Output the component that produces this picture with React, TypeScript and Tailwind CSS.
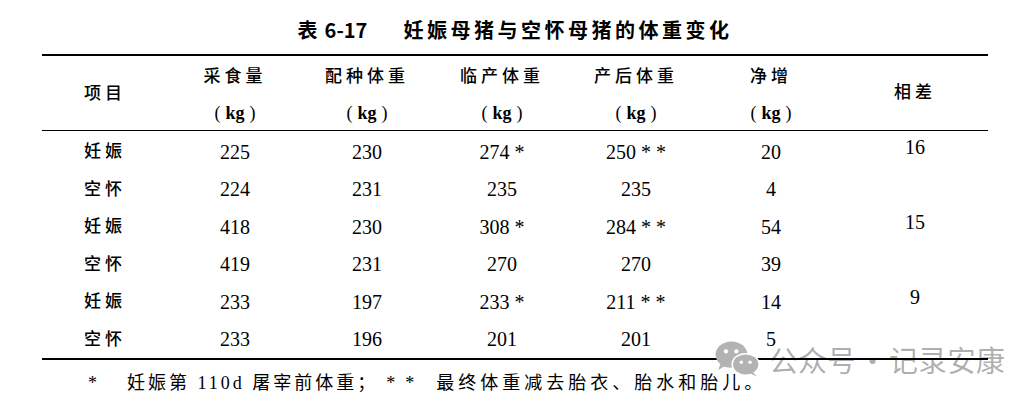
import React from "react";

const cjk = { fontFamily: '"Liberation Serif", "Noto Sans CJK SC", serif' };
const title = { fontFamily: '"Noto Sans CJK SC", "Noto Sans", sans-serif' };

const cols = "grid grid-cols-[126px_134px_130px_140px_128px_142px_146px]";

type Row = { name: string; vals: string[]; diff?: string };
const rows: Row[] = [
  { name: "妊娠", vals: ["225", "230", "274 *", "250 * *", "20"], diff: "16" },
  { name: "空怀", vals: ["224", "231", "235", "235", "4"] },
  { name: "妊娠", vals: ["418", "230", "308 *", "284 * *", "54"], diff: "15" },
  { name: "空怀", vals: ["419", "231", "270", "270", "39"] },
  { name: "妊娠", vals: ["233", "197", "233 *", "211 * *", "14"], diff: "9" },
  { name: "空怀", vals: ["233", "196", "201", "201", "5"] },
];

const headers = ["采食量", "配种体重", "临产体重", "产后体重", "净增"];

function WeChatIcon() {
  return (
    <svg width="46" height="38" viewBox="0 0 42 34">
      <ellipse cx="15" cy="13" rx="14.5" ry="12" fill="#b3b3b3" />
      <path d="M5 21 L3 27 L10 23 Z" fill="#b3b3b3" />
      <circle cx="10" cy="10" r="2" fill="#fff" />
      <circle cx="19.5" cy="10" r="2" fill="#fff" />
      <ellipse cx="28" cy="22" rx="13" ry="10.5" fill="#fff" />
      <ellipse cx="28" cy="22" rx="11.5" ry="9.2" fill="#b3b3b3" />
      <path d="M35 29 L38 33 L32 30 Z" fill="#b3b3b3" />
      <circle cx="24" cy="20" r="1.6" fill="#fff" />
      <circle cx="32" cy="20" r="1.6" fill="#fff" />
    </svg>
  );
}

function Kg() {
  return (
    <div className="mt-[12px] text-[18px] leading-[24px] font-bold flex">
      <span className="font-normal">(</span>
      <span className="mx-[5px]">kg</span>
      <span className="font-normal">)</span>
    </div>
  );
}

export default function App() {
  return (
    <div className="relative w-[1032px] h-[402px] bg-white text-black overflow-hidden">
      <div className="ml-[42px] w-[946px]">
        <div
          className="pt-[17px] h-[54px] flex justify-center items-start text-[20px] leading-[26px] font-bold whitespace-pre"
          style={title}
        >
          <span>表</span>
          <span className="ml-[7px]">6-17</span>
          <span className="ml-[36px] tracking-[3.5px]">妊娠母猪与空怀母猪的体重变化</span>
        </div>

        <div className={`${cols} border-t-2 border-b border-black h-[77px]`} style={cjk}>
          <div className="flex items-center justify-center text-[17px] tracking-[4px] font-medium pt-[2px]">
            项目
          </div>
          {headers.map((h) => (
            <div key={h} className="flex flex-col items-center pt-[9px]">
              <div className="text-[17px] leading-[24px] tracking-[4px] font-medium">{h}</div>
              <Kg />
            </div>
          ))}
          <div className="flex items-center justify-center text-[17px] tracking-[4px] font-medium">
            相差
          </div>
        </div>

        <div className="pt-[2px] border-b-2 border-black" style={cjk}>
          {rows.map((r, i) => (
            <div key={i} className={`${cols} h-[37.5px] items-center`}>
              <div className="text-center text-[17px] tracking-[4px] font-medium">{r.name}</div>
              {r.vals.map((v, j) => (
                <div key={j} className="text-center text-[20px] leading-[24px] whitespace-pre">
                  {v}
                </div>
              ))}
              <div className="text-center text-[20px] leading-[24px] pb-[9px]">{r.diff ?? ""}</div>
            </div>
          ))}
        </div>

        <div className="mt-[11px] text-[18px] leading-[24px] whitespace-pre flex" style={cjk}>
          <span className="ml-[46px]">*</span>
          <span className="ml-[30px] tracking-[3px]">妊娠第 110d 屠宰前体重；</span>
          <span className="ml-[8px]">*</span>
          <span className="ml-[10px]">*</span>
          <span className="ml-[22px] tracking-[4px]">最终体重减去胎衣、胎水和胎儿。</span>
        </div>
      </div>

      <div className="absolute left-[715px] top-[340px] flex items-center gap-[8px] pointer-events-none">
        <WeChatIcon />
        <span
          className="flex text-[29px] leading-[38px] text-[rgba(0,0,0,0.33)] whitespace-pre"
          style={{ fontFamily: '"Noto Sans CJK SC", sans-serif' }}
        >
          <span>公众号</span>
          <span className="mx-[2px]">·</span>
          <span>记录安康</span>
        </span>
      </div>
    </div>
  );
}
